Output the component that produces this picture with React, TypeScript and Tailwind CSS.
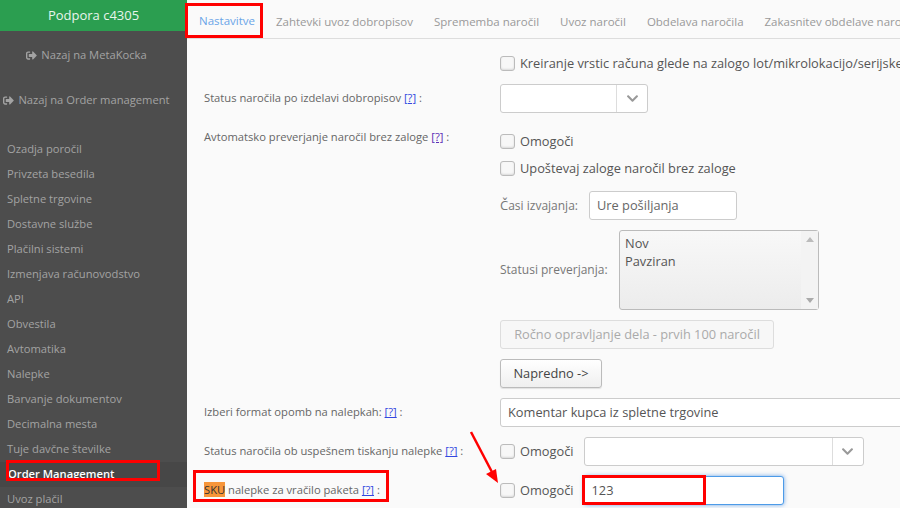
import { FaChevronDown, FaSignOutAlt } from "react-icons/fa";

const navItems = [
  "Ozadja poročil",
  "Privzeta besedila",
  "Spletne trgovine",
  "Dostavne službe",
  "Plačilni sistemi",
  "Izmenjava računovodstvo",
  "API",
  "Obvestila",
  "Avtomatika",
  "Nalepke",
  "Barvanje dokumentov",
  "Decimalna mesta",
  "Tuje davčne številke",
  "Order Management",
  "Uvoz plačil",
];

const tabs = [
  "Nastavitve",
  "Zahtevki uvoz dobropisov",
  "Sprememba naročil",
  "Uvoz naročil",
  "Obdelava naročila",
  "Zakasnitev obdelave naročil",
];

function Checkbox({ label }: { label: string }) {
  return (
    <label className="flex items-center gap-[5px] text-[12.8px] text-[#555] whitespace-nowrap">
      <span className="w-[15px] h-[15px] rounded-[3px] border border-[#bbb] bg-[#f7f7f7] shadow-[inset_0_-1px_2px_rgba(0,0,0,0.12)]" />
      {label}
    </label>
  );
}

function SelectBox({ width }: { width: string }) {
  return (
    <div className={`flex h-[29px] ${width} rounded-[3px] border border-[#ccc] bg-white`}>
      <div className="flex-1 border-r border-[#ddd]" />
      <div className="flex w-[30px] items-center justify-center">
        <FaChevronDown size={13} className="text-[#999]" />
      </div>
    </div>
  );
}

function Help({ visited }: { visited?: boolean }) {
  return <span className={visited ? "text-[#5a2db5] underline" : "text-[#3347e0] underline"}>[?]</span>;
}

function RowLabel({ children }: { children: React.ReactNode }) {
  return <div className="text-[11.2px] text-[#666] whitespace-nowrap">{children}</div>;
}

export default function App() {
  return (
    <div className="relative flex h-[508px] w-[900px] overflow-hidden bg-[#fafafa] font-['Open_Sans',sans-serif]">
      <aside className="w-[187px] shrink-0 bg-[#4d4d4d] text-[11.2px] text-[#a3a3a3]">
        <div className="flex h-[31px] items-center justify-center bg-[#2b9e50] text-[13px] text-[#e8f5ec]">
          Podpora c4305
        </div>
        <div className="flex h-[49px] items-center justify-center gap-[4px] pr-[14px]">
          <FaSignOutAlt size={11} />
          Nazaj na MetaKocka
        </div>
        <div className="flex h-[41px] items-center justify-center gap-[4px] pr-[14px]">
          <FaSignOutAlt size={11} />
          Nazaj na Order management
        </div>
        <nav className="mt-[16px]">
          {navItems.map((item) => (
            <div
              key={item}
              className={
                item === "Order Management"
                  ? "flex h-[25px] items-center bg-[#474747] pl-[8px] font-semibold text-white"
                  : "flex h-[25px] items-center pl-[7px]"
              }
            >
              {item}
            </div>
          ))}
        </nav>
      </aside>

      <main className="min-w-0 flex-1">
        <div className="flex h-[39px] gap-[21px] overflow-hidden border-b border-[#ddd] pl-[12px] text-[11.5px] text-[#999] whitespace-nowrap">
          {tabs.map((tab, i) => (
            <div
              key={tab}
              className={
                i === 0
                  ? "flex h-[39px] items-center border-b-2 border-[#4a90e2] pt-[5px] text-[#6aa5e8]"
                  : "flex h-[39px] items-center pt-[5px]"
              }
            >
              {tab}
            </div>
          ))}
        </div>

        <div className="grid grid-cols-[313px_1fr] pt-[17px]">
          <div />
          <div className="flex h-[15px] items-center">
            <Checkbox label="Kreiranje vrstic računa glede na zalogo lot/mikrolokacijo/serijske" />
          </div>

          <div className="mt-[13px] flex h-[29px] items-center pl-[17px]">
            <RowLabel>
              Status naročila po izdelavi dobropisov <Help /> :
            </RowLabel>
          </div>
          <div className="mt-[13px]">
            <SelectBox width="w-[148px]" />
          </div>

          <div className="mt-[16px] pl-[17px]">
            <RowLabel>
              Avtomatsko preverjanje naročil brez zaloge <Help visited /> :
            </RowLabel>
          </div>
          <div className="mt-[19px] flex flex-col">
            <Checkbox label="Omogoči" />
            <div className="mt-[8px]">
              <Checkbox label="Upoštevaj zaloge naročil brez zaloge" />
            </div>
            <div className="mt-[13px] flex items-center gap-[7px]">
              <span className="w-[82px] text-[12px] text-[#777]">
                <span className="text-[13px]">Č</span>asi izvajanja:
              </span>
              <div className="flex h-[29px] w-[148px] items-center rounded-[3px] border border-[#ccc] bg-white pl-[7px] text-[12.8px] text-[#666]">
                Ure pošiljanja
              </div>
            </div>
            <div className="mt-[10px] flex items-center gap-[10px]">
              <span className="w-[109px] text-[12px] text-[#777]">Statusi preverjanja:</span>
              <div className="flex h-[80px] w-[200px] rounded-[3px] border border-[#bbb] bg-gradient-to-b from-[#f8f8f8] to-[#ececec] text-[12.8px] leading-[18px] text-[#555]">
                <div className="flex-1 pl-[5px] pt-[3px]">
                  <div>Nov</div>
                  <div>Pavziran</div>
                </div>
                <div className="flex w-[17px] flex-col items-center justify-between bg-[#f3f3f3] py-[6px]">
                  <div className="h-0 w-0 border-x-[4px] border-b-[5px] border-x-transparent border-b-[#bbb]" />
                  <div className="h-0 w-0 border-x-[4px] border-t-[5px] border-x-transparent border-t-[#aaa]" />
                </div>
              </div>
            </div>
            <div className="mt-[10px] flex h-[29px] w-[274px] items-center justify-center rounded-[3px] border border-[#ddd] bg-[#f7f7f7] text-[12.8px] text-[#aaa]">
              Ročno opravljanje dela - prvih 100 naročil
            </div>
            <div className="mt-[10px] flex h-[29px] w-[102px] items-center justify-center rounded-[3px] border border-[#bbb] bg-gradient-to-b from-white to-[#efefef] text-[12.8px] text-[#444] shadow-[0_1px_1px_rgba(0,0,0,0.1)]">
              Napredno -&gt;
            </div>
          </div>

          <div className="mt-[10px] flex h-[29px] items-center pl-[17px]">
            <RowLabel>
              Izberi format opomb na nalepkah: <Help /> :
            </RowLabel>
          </div>
          <div className="mt-[10px] flex h-[29px] w-[420px] items-center rounded-l-[3px] border border-[#ccc] bg-white pl-[7px] text-[12.8px] text-[#555]">
            Komentar kupca iz spletne trgovine
          </div>

          <div className="mt-[10px] flex h-[29px] items-center pl-[17px]">
            <RowLabel>
              Status naročila ob uspešnem tiskanju nalepke <Help /> :
            </RowLabel>
          </div>
          <div className="mt-[10px] flex items-center gap-[10px]">
            <Checkbox label="Omogoči" />
            <SelectBox width="w-[280px]" />
          </div>

          <div className="mt-[10px] flex h-[29px] items-center pl-[17px]">
            <RowLabel>
              <span className="bg-[#f7963a] text-[#333]">SKU</span> nalepke za vračilo paketa <Help /> :
            </RowLabel>
          </div>
          <div className="mt-[10px] flex items-center gap-[10px]">
            <Checkbox label="Omogoči" />
            <div className="flex h-[29px] w-[200px] items-center rounded-[3px] border border-[#4d9be8] bg-white pl-[7px] text-[12.8px] text-[#555] shadow-[0_0_4px_rgba(74,144,226,0.8)]">
              123
            </div>
          </div>
        </div>
      </main>

      {/* red annotations on top of the screenshot */}
      <div className="absolute left-[185px] top-[3px] h-[35px] w-[78px] border-[3px] border-[#f00]" />
      <div className="absolute left-[6px] top-[460px] h-[21px] w-[154px] border-[3px] border-[#f00]" />
      <div className="absolute left-[193px] top-[470px] h-[32px] w-[196px] border-[3px] border-[#f00]" />
      <div className="absolute left-[582px] top-[475px] h-[30px] w-[124px] border-[3px] border-[#f00]" />
      <svg className="absolute left-[465px] top-[428px]" width="40" height="60" viewBox="0 0 40 60">
        <line x1="6" y1="4" x2="28" y2="46" stroke="#f00" strokeWidth="2.5" />
        <polygon points="33,55 21,46 31,41" fill="#f00" />
      </svg>
    </div>
  );
}
